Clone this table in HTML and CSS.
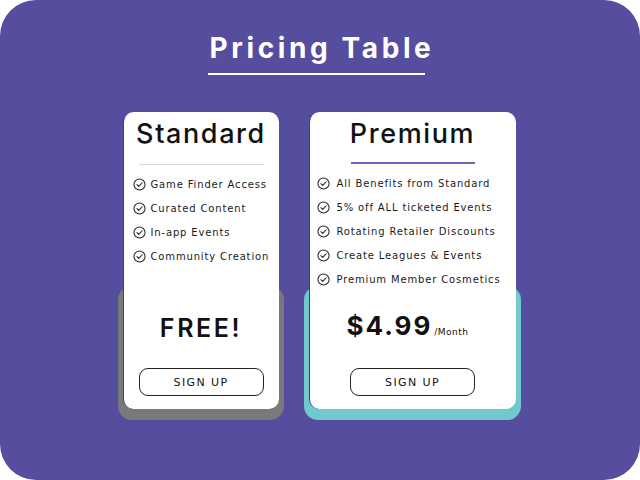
FILE: index.html
```html
<!DOCTYPE html>
<html>
<head>
<meta charset="utf-8">
<link rel="stylesheet" href="styles.css">
</head>
<body>
<main class="board">
  <header class="heading">
    <h1 class="heading-title">Pricing Table</h1>
    <div class="heading-rule"></div>
  </header>
  <section class="plans">
    <div class="plan plan-standard">
      <div class="card">
        <h2 class="plan-name">Standard</h2>
        <div class="divider divider-grey"></div>
        <ul class="features">
          <li class="feature"><svg class="check" viewBox="0 0 14 14"><circle cx="7" cy="7" r="6" /><path d="M4.2 7.2 L6.2 9.1 L9.9 5.1" /></svg>Game Finder Access</li>
          <li class="feature"><svg class="check" viewBox="0 0 14 14"><circle cx="7" cy="7" r="6" /><path d="M4.2 7.2 L6.2 9.1 L9.9 5.1" /></svg>Curated Content</li>
          <li class="feature"><svg class="check" viewBox="0 0 14 14"><circle cx="7" cy="7" r="6" /><path d="M4.2 7.2 L6.2 9.1 L9.9 5.1" /></svg>In-app Events</li>
          <li class="feature"><svg class="check" viewBox="0 0 14 14"><circle cx="7" cy="7" r="6" /><path d="M4.2 7.2 L6.2 9.1 L9.9 5.1" /></svg>Community Creation</li>
        </ul>
        <div class="price"><span class="price-free">FREE!</span></div>
        <button class="signup">SIGN UP</button>
      </div>
    </div>
    <div class="plan plan-premium">
      <div class="card">
        <h2 class="plan-name">Premium</h2>
        <div class="divider divider-purple"></div>
        <ul class="features">
          <li class="feature"><svg class="check" viewBox="0 0 14 14"><circle cx="7" cy="7" r="6" /><path d="M4.2 7.2 L6.2 9.1 L9.9 5.1" /></svg>All Benefits from Standard</li>
          <li class="feature"><svg class="check" viewBox="0 0 14 14"><circle cx="7" cy="7" r="6" /><path d="M4.2 7.2 L6.2 9.1 L9.9 5.1" /></svg>5% off ALL ticketed Events</li>
          <li class="feature"><svg class="check" viewBox="0 0 14 14"><circle cx="7" cy="7" r="6" /><path d="M4.2 7.2 L6.2 9.1 L9.9 5.1" /></svg>Rotating Retailer Discounts</li>
          <li class="feature"><svg class="check" viewBox="0 0 14 14"><circle cx="7" cy="7" r="6" /><path d="M4.2 7.2 L6.2 9.1 L9.9 5.1" /></svg>Create Leagues &amp; Events</li>
          <li class="feature"><svg class="check" viewBox="0 0 14 14"><circle cx="7" cy="7" r="6" /><path d="M4.2 7.2 L6.2 9.1 L9.9 5.1" /></svg>Premium Member Cosmetics</li>
        </ul>
        <div class="price price-premium"><span class="price-amount">$4.99</span><span class="price-unit">/Month</span></div>
        <button class="signup">SIGN UP</button>
      </div>
    </div>
  </section>
</main>
</body>
</html>
```

FILE: styles.css
```css
html, body {
  margin: 0;
  padding: 0;
  background: #ffffff;
}

body {
  width: 640px;
  height: 480px;
  font-family: "DejaVu Sans", "Liberation Sans", sans-serif;
  color: #111111;
}

.board {
  box-sizing: border-box;
  width: 640px;
  height: 480px;
  background: #554e9e;
  border-radius: 36px;
  display: flex;
  flex-direction: column;
  align-items: center;
  padding-top: 31px;
}

.heading {
  display: flex;
  flex-direction: column;
  align-items: center;
}

.heading-title {
  margin: 0 0 0 4px;
  font-family: "Inter", "DejaVu Sans", sans-serif;
  font-weight: 700;
  font-size: 28px;
  line-height: 34px;
  color: #ffffff;
  letter-spacing: 3.6px;
}

.heading-rule {
  width: 217px;
  height: 2px;
  background: #ffffff;
  margin-top: 8px;
  margin-left: -7px;
}

.plans {
  display: flex;
  gap: 30px;
  margin-top: 37px;
  margin-left: -2px;
  align-items: flex-start;
}

.plan {
  position: relative;
}

.plan::before {
  content: "";
  position: absolute;
  left: -5px;
  right: -5px;
  top: 174px;
  bottom: -11px;
  border-radius: 14px;
}

.plan-standard::before {
  background: #797979;
}

.plan-premium::before {
  background: #70cacd;
}

.plan-standard .card {
  width: 156px;
}

.plan-premium .card {
  width: 207px;
}

.card {
  position: relative;
  box-sizing: border-box;
  height: 297px;
  background: #ffffff;
  border-left: 1px solid #3b35b0;
  border-radius: 10px;
  display: flex;
  flex-direction: column;
  align-items: center;
  padding-top: 7px;
  padding-bottom: 13px;
}

.plan-name {
  margin: 0;
  font-family: "Inter", "DejaVu Sans", sans-serif;
  font-weight: 500;
  font-size: 27px;
  line-height: 30px;
  color: #111111;
  letter-spacing: 1.6px;
}

.divider {
  width: 125px;
  height: 1px;
  margin-top: 15px;
}

.divider-grey {
  background: #d6d6d6;
}

.divider-purple {
  width: 124px;
  height: 2px;
  background: #6d66bb;
  margin-top: 13px;
}

.features {
  list-style: none;
  margin: 6px 0 0 0;
  padding: 0;
  align-self: stretch;
  padding-left: 9px;
}

.plan-premium .features {
  padding-left: 7px;
}

.feature {
  display: flex;
  align-items: center;
  height: 24px;
  font-size: 10px;
  letter-spacing: 0.85px;
  color: #1a1a1a;
  white-space: nowrap;
}

.feature:first-child {
  padding-top: 1px;
}

.check {
  width: 13px;
  height: 13px;
  margin-right: 5px;
  flex: none;
  fill: none;
  stroke: #222222;
  stroke-width: 1.1;
  stroke-linecap: round;
  stroke-linejoin: round;
}

.plan-premium .check {
  margin-right: 7px;
}

.price {
  margin-top: auto;
  margin-bottom: 25px;
  height: 30px;
  display: flex;
  align-items: baseline;
  justify-content: center;
}

.price-premium {
  margin-bottom: 27px;
  margin-right: 10px;
}

.price-free {
  font-family: "Inter", "DejaVu Sans", sans-serif;
  font-weight: 600;
  font-size: 25px;
  line-height: 30px;
  letter-spacing: 2.6px;
}

.price-amount {
  font-family: "Inter", "DejaVu Sans", sans-serif;
  font-weight: 700;
  font-size: 26px;
  line-height: 30px;
  letter-spacing: 2px;
}

.price-unit {
  font-size: 9px;
  margin-left: 2px;
  letter-spacing: 0.5px;
}

.signup {
  box-sizing: border-box;
  width: 125px;
  height: 28px;
  background: #ffffff;
  border: 1px solid #222222;
  border-radius: 9px;
  font-family: "DejaVu Sans", sans-serif;
  font-size: 11px;
  letter-spacing: 1.4px;
  color: #111111;
  padding: 0;
}
```
